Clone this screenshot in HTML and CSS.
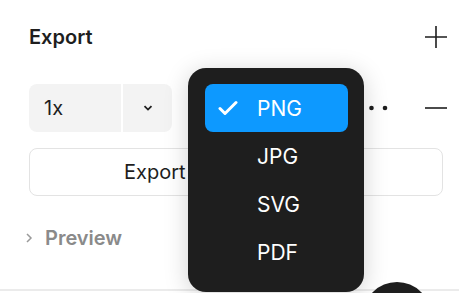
FILE: index.html
```html
<!DOCTYPE html>
<html lang="en">
  <head>
    <meta charset="UTF-8" />
    <meta name="viewport" content="width=device-width, initial-scale=1.0" />
    <title>Export</title>
    <link rel="stylesheet" href="styles.css">
  </head>
  <body>
    <div class="panel">
      <!-- Header -->
      <div class="header">
        <h2>Export</h2>
        <svg class="icon" width="24" height="24" viewBox="0 0 24 24">
          <path d="M12 1v22M1 12h22" stroke="#1e1e1e" stroke-width="1.6" fill="none" />
        </svg>
      </div>

      <!-- Export setting row -->
      <div class="setting-row">
        <div class="scale-select">
          <span class="scale-value">1x</span>
          <span class="scale-caret">
            <svg width="10" height="6" viewBox="0 0 10 6">
              <path d="M1.5 1.2L5 4.6l3.5-3.4" stroke="#1e1e1e" stroke-width="1.8" fill="none" />
            </svg>
          </span>
        </div>
        <div class="format-spacer"></div>
        <svg class="dots" width="34" height="6" viewBox="0 0 34 6">
          <circle cx="3" cy="3" r="2.3" fill="#1e1e1e" />
          <circle cx="16.5" cy="3" r="2.3" fill="#1e1e1e" />
          <circle cx="30" cy="3" r="2.3" fill="#1e1e1e" />
        </svg>
        <svg class="icon" width="24" height="24" viewBox="0 0 24 24">
          <path d="M1 12h22" stroke="#1e1e1e" stroke-width="1.6" fill="none" />
        </svg>
      </div>

      <button type="button" class="export-btn">Export</button>

      <div class="preview">
        <svg width="8" height="10" viewBox="0 0 8 10">
          <path d="M2 1l4 4-4 4" stroke="#9a9a9a" stroke-width="1.5" fill="none" />
        </svg>
        <span>Preview</span>
      </div>
    </div>

    <!-- Format dropdown -->
    <ul class="format-menu">
      <li class="selected">
        <svg class="check" width="20" height="16" viewBox="0 0 20 16">
          <path d="M2 8.5l5 5L18 2.5" stroke="#fff" stroke-width="3" fill="none" stroke-linecap="round" stroke-linejoin="round" />
        </svg>
        PNG
      </li>
      <li>JPG</li>
      <li>SVG</li>
      <li>PDF</li>
    </ul>

    <div class="help-clip">
      <div class="help-btn"></div>
    </div>
  </body>
</html>
```

FILE: styles.css
```css
body {
  font-family: Inter, "Noto Sans", sans-serif;
  background-color: #fff;
  color: #1e1e1e;
  margin: 0;
  padding: 0;
  width: 459px;
  height: 293px;
  overflow: hidden;
  position: relative;
}

.panel {
  height: 291px;
  padding: 22px 11px 0 29px;
  box-sizing: border-box;
  border-bottom: 2px solid #ebebeb;
}

.header {
  display: flex;
  justify-content: space-between;
  align-items: center;
  height: 30px;
}

.header h2 {
  margin: 0;
  font-size: 20px;
  font-weight: 600;
  line-height: 30px;
}

.setting-row {
  display: flex;
  align-items: center;
  height: 48px;
  margin-top: 32px;
}

.scale-select {
  display: flex;
  width: 143px;
  height: 48px;
  background-color: #f3f3f3;
  border-radius: 8px;
}

.scale-value {
  width: 94px;
  padding-left: 15px;
  box-sizing: border-box;
  font-size: 20px;
  line-height: 48px;
  border-right: 2px solid #fff;
}

.scale-caret {
  flex: 1;
  display: flex;
  align-items: center;
  justify-content: center;
}

.format-spacer {
  flex: 1;
}

.dots {
  margin-right: 35px;
}

.export-btn {
  display: block;
  width: 414px;
  height: 48px;
  margin-top: 16px;
  padding: 0 0 0 94px;
  background-color: #fff;
  border: 1.5px solid #e3e3e3;
  border-radius: 8px;
  font-family: inherit;
  font-size: 20px;
  color: #1e1e1e;
  text-align: left;
}

.preview {
  display: flex;
  align-items: center;
  gap: 12px;
  margin-top: 30px;
  margin-left: -4px;
  font-size: 20px;
  font-weight: 600;
  color: #8a8a8a;
}

.format-menu {
  position: absolute;
  left: 188px;
  top: 68px;
  width: 176px;
  height: 224px;
  margin: 0;
  padding: 16px 16px 0 17px;
  box-sizing: border-box;
  list-style: none;
  background-color: #1e1e1e;
  border-radius: 18px;
  box-shadow: 0 4px 24px rgba(0, 0, 0, 0.18);
}

.format-menu li {
  display: flex;
  align-items: center;
  height: 48px;
  padding-left: 52px;
  font-size: 21px;
  color: #fff;
  position: relative;
}

.format-menu li.selected {
  background-color: #0d99ff;
  border-radius: 8px;
}

.check {
  position: absolute;
  left: 13px;
  top: 16px;
}

.help-clip {
  position: absolute;
  left: 363px;
  top: 282px;
  width: 68px;
  height: 11px;
  overflow: hidden;
}

.help-btn {
  width: 68px;
  height: 68px;
  border-radius: 50%;
  background-color: #1e1e1e;
}
```
